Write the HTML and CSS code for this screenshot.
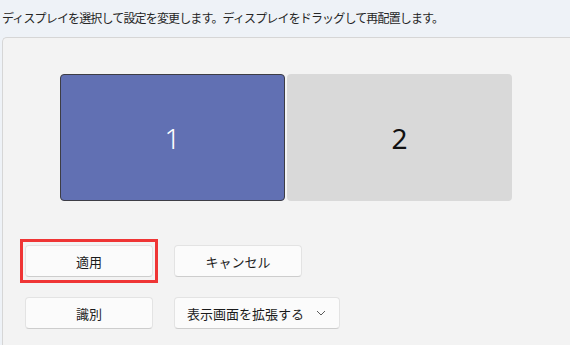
FILE: index.html
```html
<!DOCTYPE html>
<html lang="ja">
<head>
<meta charset="utf-8">
<link rel="stylesheet" href="styles.css">
</head>
<body>
<div class="page">
  <p class="hint">ディスプレイを選択して設定を変更します。ディスプレイをドラッグして再配置します。</p>
  <div class="panel">
    <div class="monitors">
      <div class="monitor selected">1</div>
      <div class="monitor">2</div>
    </div>
    <div class="row row-first">
      <div class="highlight-wrap">
        <button class="btn">適用</button>
        <span class="highlight"></span>
      </div>
      <button class="btn">キャンセル</button>
    </div>
    <div class="row">
      <button class="btn">識別</button>
      <button class="btn dropdown">表示画面を拡張する
        <svg class="chev" width="10" height="6" viewBox="0 0 10 6"><path d="M1 1 L5 5 L9 1" fill="none" stroke="#5a5a5a" stroke-width="1"/></svg>
      </button>
    </div>
  </div>
</div>
</body>
</html>
```

FILE: styles.css
```css
html, body {
  margin: 0;
  padding: 0;
  width: 570px;
  height: 345px;
  overflow: hidden;
  background: #eef2f7;
  font-family: "Noto Sans CJK JP", "Noto Sans", sans-serif;
  color: #1b1b1b;
}
.page {
  display: flex;
  flex-direction: column;
  height: 345px;
}
.hint {
  margin: 0;
  height: 37px;
  line-height: 36px;
  padding-left: 2px;
  font-size: 12px;
  letter-spacing: -0.85px;
  color: #262626;
}
.panel {
  margin-left: 2px;
  flex: 1;
  background: #f3f3f3;
  border: 1px solid #d6d6d6;
  border-right: none;
  border-bottom: none;
  border-radius: 5px 0 0 0;
  padding: 36px 0 0 22px;
  display: flex;
  flex-direction: column;
}
.monitors {
  display: flex;
  gap: 2px;
  margin-left: 35px;
}
.monitor {
  width: 225px;
  height: 127px;
  box-sizing: border-box;
  border-radius: 4px;
  background: #d9d9d9;
  display: flex;
  align-items: center;
  justify-content: center;
  font-family: "Noto Sans", "Open Sans", sans-serif;
  font-size: 28px;
  font-weight: 400;
  color: #111;
}
.monitor.selected {
  background: #6170b3;
  border: 1px solid #3d3d45;
  color: #fff;
  font-weight: 300;
}
.row {
  display: flex;
  gap: 21px;
  margin-top: 20px;
}
.row-first {
  margin-top: 44px;
}
.btn {
  height: 32px;
  width: 128px;
  box-sizing: border-box;
  background: #fbfbfb;
  border: 1px solid #e3e3e3;
  border-bottom-color: #cdcdcd;
  border-radius: 4px;
  font-family: "Noto Sans CJK JP", sans-serif;
  font-size: 13px;
  color: #1b1b1b;
  padding: 0;
  display: flex;
  align-items: center;
  justify-content: center;
}
.highlight-wrap {
  position: relative;
  display: flex;
}
.highlight {
  position: absolute;
  top: -6px;
  bottom: -6px;
  left: -5px;
  right: -5px;
  border: 3px solid #ef3535;
}
.dropdown {
  width: 166px;
  justify-content: flex-start;
  padding-left: 12px;
  gap: 12px;
}
.chev {
  display: block;
}
```
